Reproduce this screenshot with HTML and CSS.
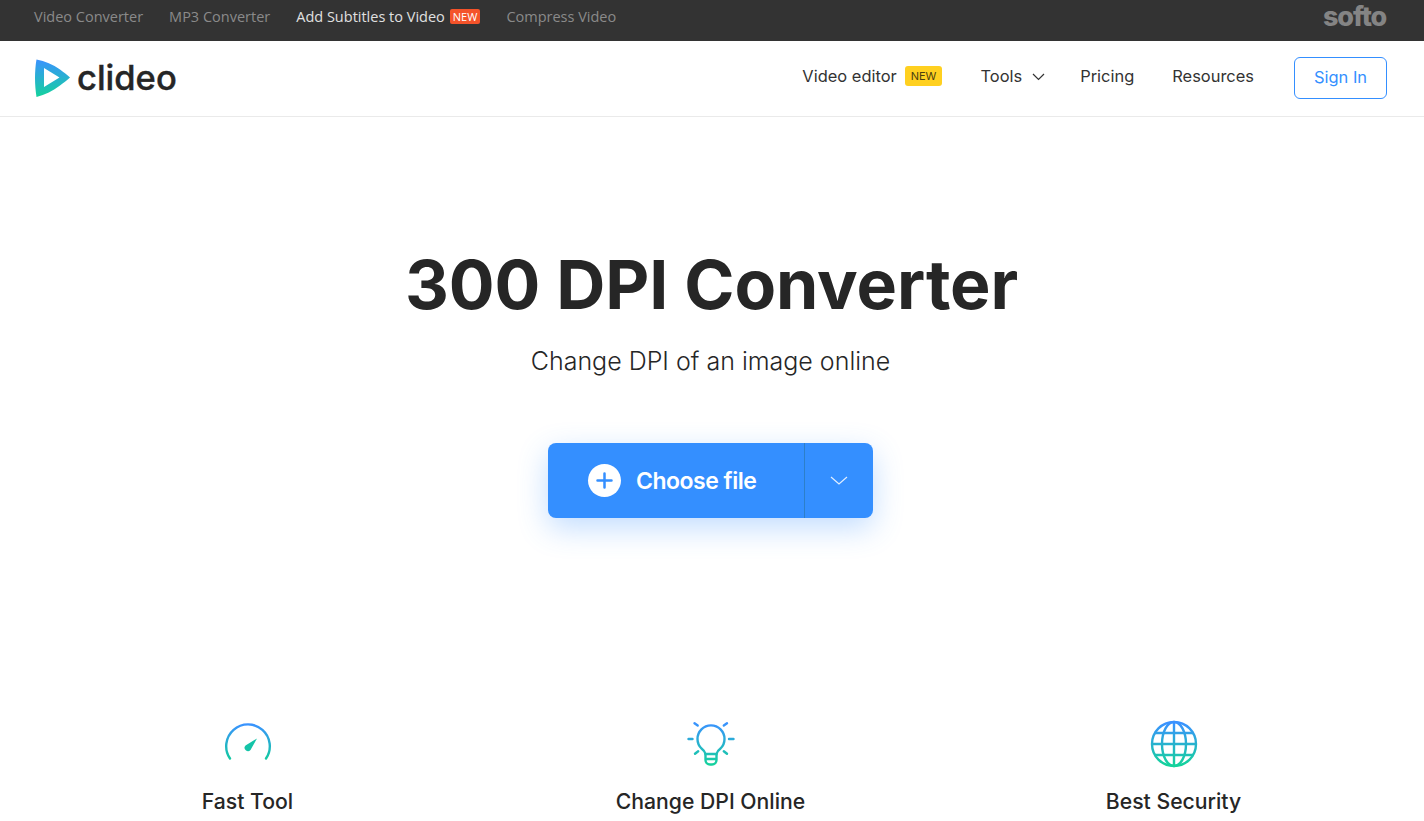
FILE: index.html
```html
<!DOCTYPE html>
<html lang="en">
<head>
    <meta charset="UTF-8">
    <meta name="viewport" content="width=device-width, initial-scale=1.0">
    <title>300 DPI Converter</title>
    <link rel="stylesheet" href="styles.css">
</head>
<body>
    <svg class="defs" width="0" height="0">
        <defs>
            <linearGradient id="grad" x1="0" y1="0" x2="0" y2="1">
                <stop offset="0" stop-color="#3a92ff"/>
                <stop offset="1" stop-color="#14d29c"/>
            </linearGradient>
            <linearGradient id="gradUse" gradientUnits="userSpaceOnUse" x1="0" y1="3" x2="0" y2="45">
                <stop offset="0" stop-color="#3a92ff"/>
                <stop offset="1" stop-color="#14d29c"/>
            </linearGradient>
            <linearGradient id="gradGauge" gradientUnits="userSpaceOnUse" x1="0" y1="4" x2="0" y2="38">
                <stop offset="0" stop-color="#3a92ff"/>
                <stop offset="1" stop-color="#14c8a4"/>
            </linearGradient>
        </defs>
    </svg>

    <div class="topbar">
        <nav class="toplinks">
            <a href="#">Video Converter</a>
            <a href="#">MP3 Converter</a>
            <a href="#" class="active">Add Subtitles to Video <span class="tag-red">NEW</span></a>
            <a href="#">Compress Video</a>
        </nav>
        <span class="softo">softo</span>
    </div>

    <header class="header">
        <a href="#" class="logo">
            <svg width="35" height="38" viewBox="0 0 35 38">
                <path fill="url(#grad)" fill-rule="evenodd" d="M1.500.5C10 2 18 5.500 25 10.500c3.500 2.500 6.500 5 10 8-3.500 3-6.500 5.500-10 8C18 31.500 10 36 1.500 38 .5 32 0 25 0 19S.5 6 1.500.5zM9 9v19l15.500-9.500z"/>
            </svg>
            <span class="logo-text">clideo</span>
        </a>
        <nav class="mainnav">
            <a href="#">Video editor <span class="tag-yellow">NEW</span></a>
            <a href="#">Tools
                <svg class="caret" width="13" height="8" viewBox="0 0 13 8"><path d="M1 1l5.500 5.500L12 1" fill="none" stroke="#333" stroke-width="1.200"/></svg>
            </a>
            <a href="#">Pricing</a>
            <a href="#">Resources</a>
            <a href="#" class="signin">Sign In</a>
        </nav>
    </header>

    <main class="hero">
        <h1>300 DPI Converter</h1>
        <p class="sub">Change DPI of an image online</p>
        <div class="choose">
            <button class="choose-main">
                <span class="plus">
                    <svg width="17" height="17" viewBox="0 0 17 17"><path d="M8.500 1.500v14M1.500 8.500h14" stroke="#348fff" stroke-width="2.500" stroke-linecap="round"/></svg>
                </span>
                Choose file
            </button>
            <button class="choose-drop">
                <svg width="18" height="10" viewBox="0 0 18 10"><path d="M1 1l8 7 8-7" fill="none" stroke="#fff" stroke-width="1.200" opacity=".85"/></svg>
            </button>
        </div>
    </main>

    <section class="features">
        <div class="feature">
            <svg width="48" height="48" viewBox="0 0 48 48" fill="none">
                <path d="M6 38.500A21.800 21.800 0 1 1 42 38.500" stroke="url(#gradGauge)" stroke-width="2.400" stroke-linecap="round"/>
                <path d="M21.500 25.500L33 18.500 26.500 30a3.300 3.300 0 1 1-5-4.500z" fill="#14c4a8"/>
            </svg>
            <h3>Fast Tool</h3>
        </div>
        <div class="feature">
            <svg width="48" height="48" viewBox="0 0 48 48" fill="none" stroke="url(#gradUse)" stroke-width="2.400" stroke-linecap="round">
                <path d="M18.500 34c-.5-2.500-2-4-4-5.500A13.500 13.500 0 1 1 33.500 28.500c-2 1.500-3.500 3-4 5.500z"/>
                <path d="M18.500 34v6c0 2.500 2 4.500 4.500 4.500h2c2.500 0 4.500-2 4.500-4.500v-6M19 39h10"/>
                <path d="M7.500 3.200l3.200 2.300M40 3.200l-3.200 2.300M1.500 19h4M42 19h4.500M8 33.800l3.200-2.600M40 33.800l-3.200-2.600"/>
            </svg>
            <h3>Change DPI Online</h3>
        </div>
        <div class="feature">
            <svg width="48" height="48" viewBox="0 0 48 48" fill="none" stroke="url(#gradUse)" stroke-width="2.400">
                <circle cx="24" cy="24" r="22"/>
                <ellipse cx="24" cy="24" rx="12" ry="22"/>
                <path d="M24 2v44M2 24h44M4.500 13h39M4.500 35h39"/>
            </svg>
            <h3>Best Security</h3>
        </div>
    </section>
</body>
</html>
```

FILE: styles.css
```css
*{
    margin:0;
    padding:0;
    box-sizing:border-box;
}
html,body{
    height:821px;
    overflow:hidden;
}
body{
    background:#fff;
    color:#262626;
    font-family:"Inter","Liberation Sans",sans-serif;
}
a{
    color:inherit;
    text-decoration:none;
}
.defs{
    display:block;
    height:0;
}

/* top dark strip */
.topbar{
    height:41px;
    background:#333;
    display:flex;
    align-items:center;
    justify-content:space-between;
    padding:0 38px 8px 34px;
}
.toplinks{
    display:flex;
    gap:26px;
    font-family:"Open Sans",sans-serif;
    font-size:14.500px;
    color:#8a8a8a;
}
.toplinks a{
    display:flex;
    align-items:center;
    gap:5px;
}
.toplinks .active{
    color:#e0e0e0;
}
.tag-red{
    background:#f4532a;
    color:#fff;
    font-size:11px;
    line-height:15px;
    height:15px;
    padding:0 3px;
    border-radius:2px;
}
.softo{
    font-family:"Inter",sans-serif;
    font-weight:800;
    font-size:27px;
    letter-spacing:-1.200px;
    color:#848484;
    line-height:1;
}

/* main header */
.header{
    height:76px;
    border-bottom:1px solid #eaeaea;
    display:flex;
    align-items:center;
    justify-content:space-between;
    padding:0 37px 2px 35px;
}
.logo{
    display:flex;
    align-items:center;
    gap:7px;
}
.logo-text{
    font-family:"Inter",sans-serif;
    font-size:34.500px;
    font-weight:500;
    -webkit-text-stroke:.4px #262626;
    color:#262626;
    line-height:38px;
}
.mainnav{
    display:flex;
    align-items:center;
    gap:38px;
    font-size:16.450px;
    color:#333;
}
.mainnav a{
    display:flex;
    align-items:center;
    line-height:20px;
    padding-bottom:3px;
}
.tag-yellow{
    background:#ffd020;
    color:#4a3f10;
    font-size:11px;
    line-height:20px;
    height:20px;
    padding:0 6px;
    margin-left:8px;
    border-radius:3px;
}
.caret{
    margin-left:10px;
    margin-right:-3px;
    margin-top:2px;
}
.mainnav .signin{
    width:93px;
    height:42px;
    justify-content:center;
    border:1px solid #348fff;
    border-radius:6px;
    color:#348fff;
    margin-left:2px;
    padding-bottom:1px;
}

/* hero */
.hero{
    display:flex;
    flex-direction:column;
    align-items:center;
    padding-top:124px;
    padding-right:3px;
}
.hero h1{
    font-size:68px;
    font-weight:700;
    line-height:86px;
    letter-spacing:-.1px;
    margin-left:2px;
    color:#262626;
}
.sub{
    margin-top:16px;
    font-size:25px;
    font-weight:300;
    line-height:36px;
    color:#262626;
}
.choose{
    display:flex;
    margin-top:64px;
    height:75px;
    border-radius:8px;
    background:#348fff;
    box-shadow:0 10px 30px rgba(52,143,255,.3);
}
.choose button{
    border:none;
    background:none;
    color:#fff;
    font-family:inherit;
    display:flex;
    align-items:center;
}
.choose-main{
    width:257px;
    padding-left:40px;
    gap:15px;
    font-size:23px;
    font-weight:600;
    letter-spacing:-.5px;
    border-right:1px solid #2c7fc9 !important;
}
.plus{
    width:33px;
    height:33px;
    border-radius:50%;
    background:#fff;
    display:flex;
    align-items:center;
    justify-content:center;
}
.choose-drop{
    width:68px;
    justify-content:center;
}

/* feature columns */
.features{
    display:grid;
    grid-template-columns:repeat(3,463px);
    justify-content:center;
    padding-right:3px;
    margin-top:202px;
}
.feature{
    display:flex;
    flex-direction:column;
    align-items:center;
}
.feature h3{
    margin-top:20px;
    font-size:21.200px;
    font-weight:500;
    line-height:26px;
    color:#262626;
}
```
